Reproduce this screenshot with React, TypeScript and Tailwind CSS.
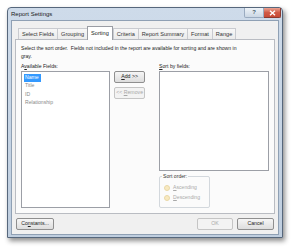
import React from "react";

const font = { fontFamily: '"Liberation Sans", Arial, sans-serif' };

function Btn({ label, w, disabled }: { label: React.ReactNode; w: string; disabled?: boolean }) {
  return (
    <div
      className={`${w} h-[12px] flex items-center justify-center rounded-[2px] border ${
        disabled ? "border-[#c5c5c5] text-[#a7a7a7] bg-[#f3f3f3]" : "border-[#8f8f8f] text-[#222] bg-gradient-to-b from-[#f6f6f6] to-[#dddddd]"
      } text-[5.2px] leading-none`}
    >
      {label}
    </div>
  );
}

function Tab({ label, selected }: { label: string; selected?: boolean }) {
  if (selected) {
    return (
      <div className="h-[14px] -mb-px relative z-10 px-[3px] flex items-center bg-white border border-b-0 border-[#9a9da4] text-[5.6px] text-[#222]">
        {label}
      </div>
    );
  }
  return (
    <div className="h-[11px] px-[3px] flex items-center bg-gradient-to-b from-[#f7f7f7] to-[#ebebeb] border border-b-0 border-[#c9cbd0] text-[5.6px] text-[#333] -mr-px">
      {label}
    </div>
  );
}

function Radio({ label }: { label: React.ReactNode }) {
  return (
    <div className="flex items-center gap-[3px] h-[10px]">
      <div className="w-[6px] h-[6px] rounded-full border border-[#e9d8a8] bg-[#f8e9c0]" />
      <span className="text-[5.1px] text-[#a9a9a9]">{label}</span>
    </div>
  );
}

export default function App() {
  return (
    <div className="w-[293px] h-[248px] bg-white overflow-hidden" style={font}>
      <div className="ml-[7px] mt-[7px] w-[276px] h-[231px] flex flex-col rounded-t-[4px] border border-[#56677c] bg-gradient-to-b from-[#cedbea] to-[#bfcedf] shadow-[2px_3px_5px_rgba(0,0,0,0.45)]">
        {/* title bar */}
        <div className="h-[12px] flex items-start">
          <div className="pl-[3px] pt-[3px] text-[6px] leading-none text-[#1a1a1a] flex-1">Report Settings</div>
          <div className="flex mr-[1px]">
            <div className="w-[20px] h-[10px] flex items-center justify-center rounded-bl-[2px] border border-t-0 border-[#9aabc0] bg-gradient-to-b from-[#eef3f8] to-[#cbd7e4] text-[6px] text-[#4a5a6a] font-bold">
              ?
            </div>
            <div className="w-[17px] h-[10px] flex items-center justify-center rounded-br-[2px] border border-t-0 border-l-0 border-[#8a3a30] bg-gradient-to-b from-[#eba393] via-[#d05a46] to-[#c84a36]">
              <svg width="7" height="6" viewBox="0 0 7 6">
                <path d="M1 0.8 L6 5.2 M6 0.8 L1 5.2" stroke="white" strokeWidth="1.4" />
              </svg>
            </div>
          </div>
        </div>
        {/* client */}
        <div className="mx-[3px] mb-[2px] flex-1 bg-[#f0f0f0] border border-[#8fa0b4] flex flex-col px-[3px] pt-[5px] pb-[4px]">
          {/* tabs */}
          <div className="flex items-end pl-[3px] h-[13px]">
            <Tab label="Select Fields" />
            <Tab label="Grouping" />
            <Tab label="Sorting" selected />
            <Tab label="Criteria" />
            <Tab label="Report Summary" />
            <Tab label="Format" />
            <Tab label="Range" />
          </div>
          {/* pane */}
          <div className="h-[175px] bg-[#fbfbfb] border border-[#b9bcc2] px-[5px] pt-[4px] flex flex-col">
            <div className="text-[5.1px] leading-[8px] text-[#222] whitespace-nowrap">
              Select the sort order.&nbsp; Fields not included in the report are available for sorting and are shown in
              <br />
              gray.
            </div>
            <div className="flex mt-[2px]">
              <div className="flex flex-col w-[90px]">
                <div className="text-[5.1px] leading-[8px] h-[9px] text-[#222]">
                  A<span className="underline">v</span>ailable Fields:
                </div>
                <div className="h-[137px] bg-white border border-[#9c9fa6] px-[2px] pt-[1px] text-[5.1px] text-[#555]">
                  <div className="h-[9px] flex items-center">
                    <span className="bg-[#3399ff] text-white px-[1px] w-[17px] h-[8px] flex items-center">Name</span>
                  </div>
                  <div className="h-[8px] flex items-center px-[1px] text-[#888]">Title</div>
                  <div className="h-[9px] flex items-center px-[1px] text-[#888]">ID</div>
                  <div className="h-[8px] flex items-center px-[1px] text-[#888]">Relationship</div>
                </div>
              </div>
              <div className="flex flex-col gap-[4px] ml-[4px] pt-[9px]">
                <Btn w="w-[31px]" label={<span><span className="underline">A</span>dd &gt;&gt;</span>} />
                <Btn w="w-[31px]" disabled label={<span>&lt;&lt; <span className="underline">R</span>emove</span>} />
              </div>
              <div className="flex flex-col ml-[14px] w-[111px]">
                <div className="text-[5.1px] leading-[8px] h-[9px] text-[#222]">
                  <span className="underline">S</span>ort by fields:
                </div>
                <div className="h-[100px] bg-white border border-[#9c9fa6]" />
                <div className="mt-[5px] w-[51px] h-[32px] rounded-[2px] border border-[#d3d8dd] relative px-[4px] pt-[6px]">
                  <div className="absolute -top-[4px] left-[2px] px-[1px] bg-[#fbfbfb] text-[5.1px] leading-[7px] text-[#333]">Sort order:</div>
                  <Radio label={<span><span className="underline">A</span>scending</span>} />
                  <Radio label={<span><span className="underline">D</span>escending</span>} />
                </div>
              </div>
            </div>
          </div>
          {/* bottom buttons */}
          <div className="flex items-center mt-[4px] pl-[1px] pr-[1px]">
            <Btn w="w-[38px]" label={<span>Co<span className="underline">n</span>stants...</span>} />
            <div className="flex-1" />
            <Btn w="w-[36px]" disabled label="OK" />
            <div className="w-[4px]" />
            <Btn w="w-[37px]" label="Cancel" />
          </div>
        </div>
      </div>
    </div>
  );
}
